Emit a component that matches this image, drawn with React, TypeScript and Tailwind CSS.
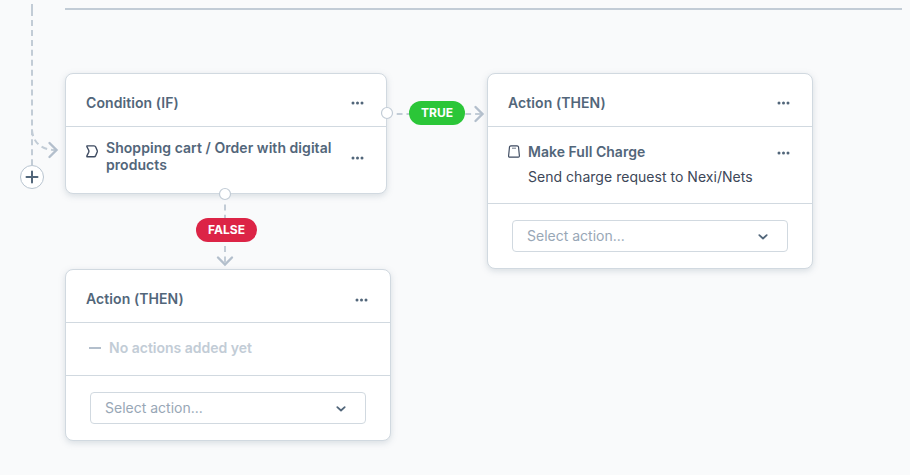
import type { ReactNode } from "react";

function Dots() {
  return (
    <svg width="13" height="4" viewBox="0 0 13 4" fill="#52667a" className="block shrink-0">
      <circle cx="2" cy="2" r="1.5" />
      <circle cx="6.5" cy="2" r="1.5" />
      <circle cx="11" cy="2" r="1.5" />
    </svg>
  );
}

function Card({
  title,
  className,
  menuClass = "",
  children,
}: {
  title: string;
  className: string;
  menuClass?: string;
  children: ReactNode;
}) {
  return (
    <section
      className={`flex flex-col rounded-lg border border-[#d1d9e0] bg-white shadow-[0_2px_6px_rgba(120,138,155,0.25)] ${className}`}
    >
      <header className="flex h-[52px] items-center justify-between pl-5 pr-[22px] pt-[7px] pb-px">
        <h2 className="text-sm font-semibold leading-5 tracking-[0.08px]">{title}</h2>
        <div className={menuClass}>
          <Dots />
        </div>
      </header>
      {children}
    </section>
  );
}

function SelectAction() {
  return (
    <div className="border-t border-[#d1d9e0] px-6 py-4">
      <div className="flex h-8 items-center justify-between rounded border border-[#d1d9e0] pl-3.5 pr-[19px]">
        <span className="text-sm text-[#98a7b6]">Select action...</span>
        <svg width="10" height="7" viewBox="0 0 10 7" fill="none" stroke="#52667a" strokeWidth="1.8" strokeLinecap="round" strokeLinejoin="round">
          <path d="M1.3 2.1 5 5.5 8.7 2.1" />
        </svg>
      </div>
    </div>
  );
}

function Connectors() {
  return (
    <svg width="910" height="475" viewBox="0 0 910 475" fill="none" stroke="#c2ccd6" strokeWidth="2" className="pointer-events-none absolute left-0 top-0">
      <path d="M65 9H902" />
      <path d="M32 4V16" />
      <path d="M32 20V165" strokeDasharray="6 3.94" />
      <path d="M32 130C33 143 42 150 55 150" strokeDasharray="6 4" />
      <path d="M396.7 114H482" strokeDasharray="5.8 4" />
      <path d="M225 204.4V264" strokeDasharray="6 4.4" />
      <g stroke="#b3bfcc" strokeWidth="2.4" strokeLinecap="round">
        <path d="M49.5 143 56.5 150 49.5 157" />
        <path d="M475.5 107 482.5 114 475.5 121" />
        <path d="M218 257.5 225 264.5 232 257.5" />
      </g>
      <circle cx="387" cy="113" r="5.5" fill="white" strokeWidth="1.2" />
      <circle cx="225" cy="194" r="5.5" fill="white" strokeWidth="1.2" />
      <circle cx="32" cy="177" r="11.5" fill="white" strokeWidth="1" stroke="#b8c4d0" />
      <path d="M26.5 177H37.5M32 171.5V182.5" stroke="#52667a" strokeLinecap="round" />
    </svg>
  );
}

export default function App() {
  return (
    <main className="relative h-[475px] w-[910px] overflow-hidden bg-[#f9fafb] pl-[65px] pt-[73px] font-['Inter',sans-serif] text-[#52667a]">
      <div className="flex items-start">
        <div className="flex w-[422px] flex-col gap-[75px]">
          <Card title="Condition (IF)" className="h-[121px] w-[322px]">
            <div className="flex flex-1 items-start border-t border-[#d1d9e0] pl-5 pr-[22px] pt-3">
              <svg width="12" height="13" viewBox="0 0 12 13" fill="none" stroke="#3d4a60" strokeWidth="1.4" strokeLinejoin="round" className="mt-[6px] shrink-0">
                <path d="M.9.9H8.1Q9.2.9 9.7 2L11.2 5.6Q11.4 6.3 11.2 7L9.7 10.6Q9.2 11.7 8.1 11.7H.9V10.9L2.7 7.3Q3.1 6.3 2.7 5.3L.9 1.7Z" />
              </svg>
              <p className="ml-2 w-[240px] text-sm font-semibold leading-[17px] tracking-[0.05px]">
                Shopping cart / Order with digital products
              </p>
              <div className="ml-auto pt-[17px]">
                <Dots />
              </div>
            </div>
          </Card>
          <Card title="Action (THEN)" className="h-[172px] w-[326px]" menuClass="pt-0.5">
            <div className="flex h-[53px] items-center gap-2 border-t border-[#d1d9e0] pb-0.5 pl-[23px]">
              <span className="h-0.5 w-3 bg-[#b3bfcc]" />
              <p className="text-sm font-semibold text-[#c2ccd6]">No actions added yet</p>
            </div>
            <SelectAction />
          </Card>
        </div>
        <Card title="Action (THEN)" className="h-[196px] w-[326px]">
          <div className="flex h-[77px] items-start border-t border-[#d1d9e0] pl-5 pr-[22px] pt-[15px]">
            <svg width="12" height="13" viewBox="0 0 12 13" fill="none" stroke="#3d4a60" strokeWidth="1.15" strokeLinejoin="round" className="mt-[3px] shrink-0">
              <path d="M2.9.8H9.1Q10.3.8 10.5 1.9L11.4 10.9Q11.4 12.1 10.4 12.1H1.6Q.6 12.1.6 10.9L1.5 1.9Q1.7.8 2.9.8Z" />
              <path d="M4 3.2H8" strokeWidth="1" strokeOpacity=".75" />
            </svg>
            <div className="ml-2">
              <p className="text-sm font-semibold leading-5 tracking-[0.03px]">Make Full Charge</p>
              <p className="mt-[5px] text-sm leading-5 tracking-[0.03px] text-[#3d4758]">Send charge request to Nexi/Nets</p>
            </div>
            <div className="ml-auto pt-[9px]">
              <Dots />
            </div>
          </div>
          <SelectAction />
        </Card>
      </div>
      <Connectors />
      <span className="absolute left-[409px] top-[101px] flex h-6 w-14 items-center justify-center rounded-full bg-[#2bc638] text-xs font-bold text-white">
        TRUE
      </span>
      <span className="absolute left-[196px] top-[218px] flex h-6 w-[61px] items-center justify-center rounded-full bg-[#dc2446] text-xs font-bold text-white">
        FALSE
      </span>
    </main>
  );
}
